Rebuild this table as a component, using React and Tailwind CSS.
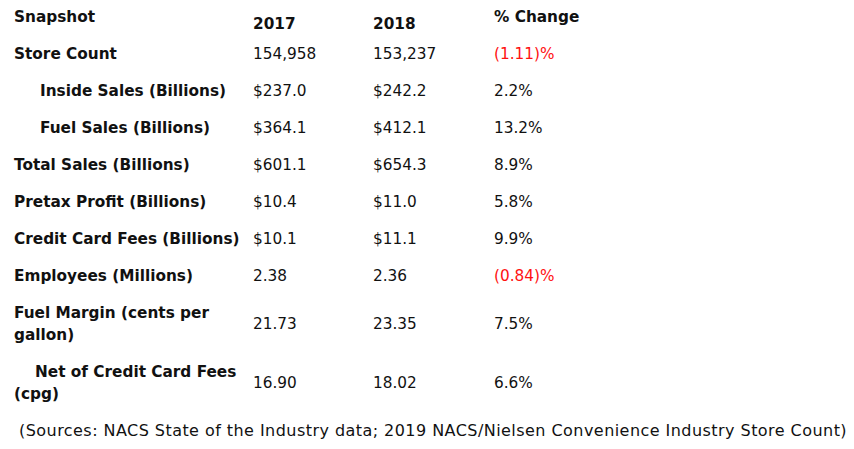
const rows = [
  { label: 'Store Count', y17: '154,958', y18: '153,237', change: '(1.11)%', neg: true },
  { label: 'Inside Sales (Billions)', y17: '$237.0', y18: '$242.2', change: '2.2%', sub: true },
  { label: 'Fuel Sales (Billions)', y17: '$364.1', y18: '$412.1', change: '13.2%', sub: true },
  { label: 'Total Sales (Billions)', y17: '$601.1', y18: '$654.3', change: '8.9%' },
  { label: 'Pretax Profit (Billions)', y17: '$10.4', y18: '$11.0', change: '5.8%' },
  { label: 'Credit Card Fees (Billions)', y17: '$10.1', y18: '$11.1', change: '9.9%' },
  { label: 'Employees (Millions)', y17: '2.38', y18: '2.36', change: '(0.84)%', neg: true },
  { label: 'Fuel Margin (cents per gallon)', y17: '21.73', y18: '23.35', change: '7.5%', tall: true },
  { label: 'Net of Credit Card Fees (cpg)', y17: '16.90', y18: '18.02', change: '6.6%', tall: true, indent: true },
];

export default function App() {
  return (
    <div className="w-[854px] h-[449px] bg-white text-[#111] font-['DejaVu_Sans',sans-serif] text-[15.3px] leading-[22px] overflow-hidden">
      <div className="flex h-[35px] font-bold">
        <div className="w-[253px] pl-[14px] pt-[6px]">Snapshot</div>
        <div className="w-[120px] pt-[13px]">2017</div>
        <div className="w-[121px] pt-[13px]">2018</div>
        <div className="flex-1 pt-[6px]">% Change</div>
      </div>

      {rows.map(r => (
        <div key={r.label} className={`flex items-center ${r.tall ? 'h-[59px]' : 'h-[37px]'}`}>
          <div className={`w-[253px] pl-[14px] pr-[7px] font-bold ${r.indent ? 'indent-[21px]' : ''}`}>
            <div className={r.sub ? 'pl-[26px]' : ''}>{r.label}</div>
          </div>
          <div className="w-[120px]">{r.y17}</div>
          <div className="w-[121px]">{r.y18}</div>
          <div className={`flex-1 ${r.neg ? 'text-[#ff1111]' : ''}`}>{r.change}</div>
        </div>
      ))}

      <p className="mt-[8px] pl-[19px] text-[16px] tracking-[0.45px] whitespace-nowrap">
        (Sources: NACS State of the Industry data; 2019 NACS/Nielsen Convenience Industry Store Count)
      </p>
    </div>
  );
}
